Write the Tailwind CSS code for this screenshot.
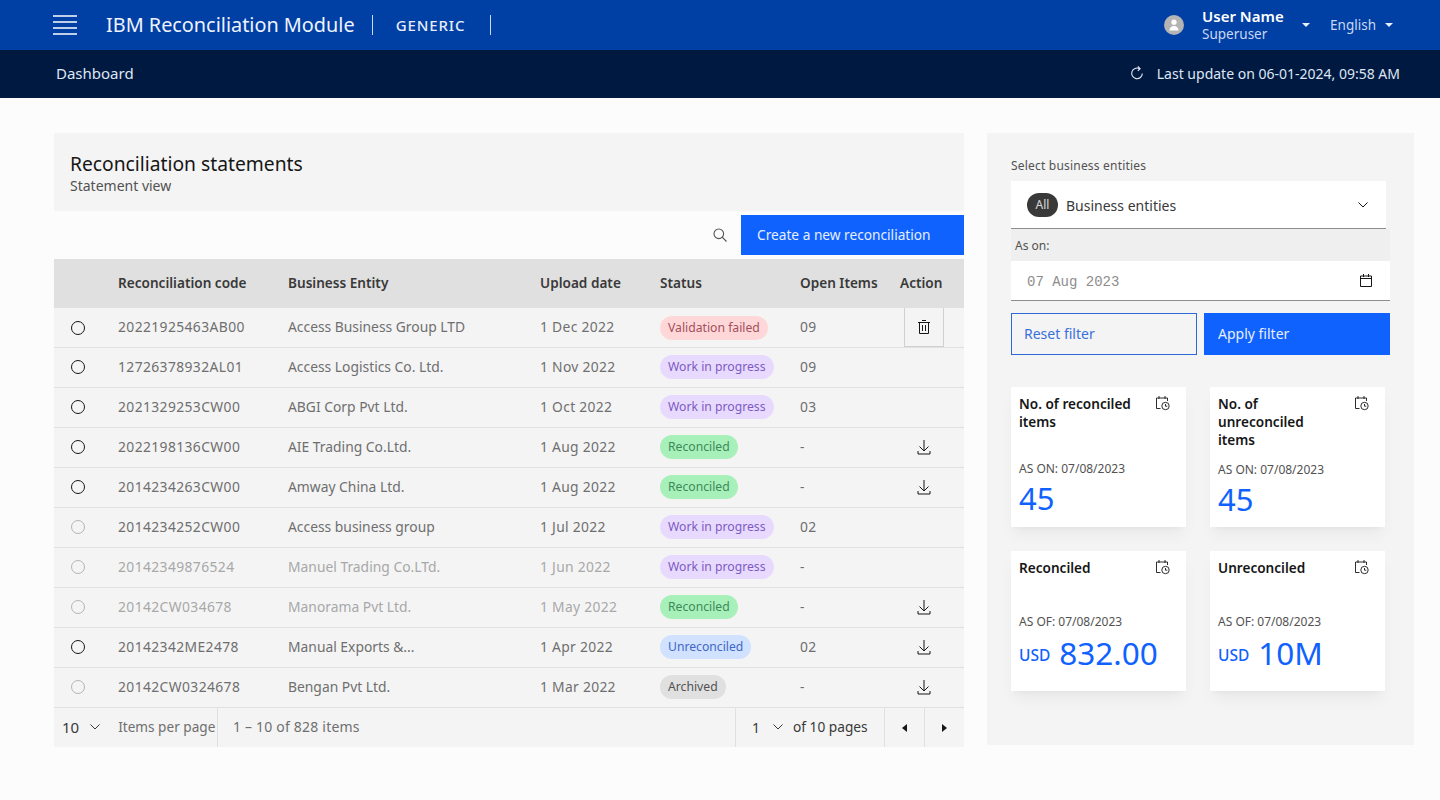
<!DOCTYPE html>
<html lang="en">
<head>
  <meta charset="UTF-8" />
  <title>IBM Reconciliation Module</title>
  <script src="https://cdn.jsdelivr.net/npm/@tailwindcss/browser@4"></script>
</head>
<body class="bg-[#fcfcfc] h-[800px] overflow-hidden font-['Noto_Sans',sans-serif] text-[#525252]">

  <!-- Top bar -->
  <header class="h-[50px] bg-[#003fa3] text-white flex items-center pl-[53px] pr-[47px]">
    <svg width="24" height="20" viewBox="0 0 24 20" stroke="#fff" stroke-width="1.500"><path d="M0 1h24M0 7h24M0 13h24M0 19h24" /></svg>
    <span class="ml-[29px] text-[19.850px] text-[#eef3ff]">IBM Reconciliation Module</span>
    <span class="ml-[17px] w-px h-5 bg-white/80"></span>
    <span class="ml-[23px] text-[15px] tracking-[0.9px] font-medium text-[#e6edfb]">GENERIC</span>
    <span class="ml-6 w-px h-5 bg-white/80"></span>
    <div class="ml-auto flex items-center">
      <span class="w-5 h-5 rounded-full bg-[#b4b4b4] flex items-center justify-center">
        <svg width="10" height="12" viewBox="0 0 10 12" fill="#fff"><circle cx="5" cy="3.200" r="2.600" /><path d="M0.500 11.500c0-3 2-4.500 4.500-4.500s4.500 1.500 4.500 4.500z" /></svg>
      </span>
      <div class="ml-[18px] w-[94px] flex flex-col">
        <span class="text-[15px] font-semibold leading-[18px] -mt-px">User Name</span>
        <span class="text-[13.500px] leading-[18px] text-[#c9d8f5]">Superuser</span>
      </div>
      <svg class="ml-[6px]" width="8" height="4" viewBox="0 0 8 4" fill="#e8efff"><path d="M0 0h8L4 4z" /></svg>
      <span class="ml-[20px] text-[13.500px] text-[#c9d8f5]">English</span>
      <svg class="ml-[9px]" width="8" height="4" viewBox="0 0 8 4" fill="#e8efff"><path d="M0 0h8L4 4z" /></svg>
    </div>
  </header>

  <!-- Sub bar -->
  <div class="h-[48px] pb-[2px] bg-[#001941] text-[#dfe6f3] flex items-center justify-between pl-[56px] pr-[40px]">
    <span class="text-[15px]">Dashboard</span>
    <div class="flex items-center text-[14px]">
      <svg width="14" height="14" viewBox="0 0 14 14" fill="none" stroke="#e6ebf5" stroke-width="1.100"><path d="M9.500 2.700A5.300 5.300 0 1 0 12.300 7.500" /><path d="M7.800 0.500l2.300 2.200-2.300 2.200" /></svg>
      <span class="ml-[13px]">Last update on 06-01-2024, 09:58 AM</span>
    </div>
  </div>

  <main class="flex pl-[54px] pt-[35px]">
    <!-- Left column -->
    <section class="w-[910px]">
      <div class="h-[78px] bg-[#f4f4f4] pl-4 pt-[18px]">
        <h1 class="text-[19.250px] leading-[26px] text-[#161616]">Reconciliation statements</h1>
        <p class="text-[14px] leading-[18px] text-[#525252]">Statement view</p>
      </div>

      <div class="h-[40px] mt-1 flex items-center justify-end">
        <svg width="14" height="14" viewBox="0 0 14 14" fill="none" stroke="#525252" stroke-width="1.100"><circle cx="5.800" cy="5.800" r="4.800" /><path d="M9.200 9.200L13.500 13.500" /></svg>
        <button class="ml-[14px] w-[223px] h-[40px] bg-[#0f62fe] text-[#e6eeff] text-[13.700px] text-left pl-4">Create a new reconciliation</button>
      </div>

      <div class="mt-1 h-[49px] bg-[#e0e0e0] grid grid-cols-[64px_170px_252px_120px_140px_100px_64px] items-center text-[13.600px] font-semibold text-[#393939]">
        <span></span><span>Reconciliation code</span><span>Business Entity</span><span>Upload date</span><span>Status</span><span>Open Items</span><span>Action</span>
      </div>

      <div class="text-[13.850px] text-[#6f6f6f]">
        <div class="h-10 pb-px bg-[#f4f4f4] border-b border-[#e0e0e0] grid grid-cols-[64px_170px_252px_120px_140px_100px_64px] items-center">
          <span class="ml-[17px] w-3.5 h-3.5 rounded-full border border-[#161616]"></span><span class="tracking-[0.4px]">20221925463AB00</span><span>Access Business Group LTD</span><span class="tracking-[0.3px]">1 Dec 2022</span>
          <span><span class="inline-block h-6 leading-6 px-2 rounded-full bg-[#ffd7d9] text-[#a2505a] text-[12.200px]">Validation failed</span></span><span class="tracking-[0.4px]">09</span>
          <span class="ml-1 w-10 h-[39px] bg-[#f4f4f4] border border-[#d0d0d0] border-t-0 flex items-center justify-center">
            <svg width="12" height="14" viewBox="0 0 12 14" fill="none" stroke="#161616"><path d="M0 2.500h12M4 .5h4M1.500 2.500v11h9v-11M4.500 5v6M7.500 5v6" /></svg>
          </span>
        </div>
        <div class="h-10 pb-px bg-[#f4f4f4] border-b border-[#e0e0e0] grid grid-cols-[64px_170px_252px_120px_140px_100px_64px] items-center">
          <span class="ml-[17px] w-3.5 h-3.5 rounded-full border border-[#161616]"></span><span class="tracking-[0.4px]">12726378932AL01</span><span>Access Logistics Co. Ltd.</span><span class="tracking-[0.3px]">1 Nov 2022</span>
          <span><span class="inline-block h-6 leading-6 px-2 rounded-full bg-[#e8daff] text-[#7d5bbf] text-[12.200px]">Work in progress</span></span><span class="tracking-[0.4px]">09</span><span></span>
        </div>
        <div class="h-10 pb-px bg-[#f4f4f4] border-b border-[#e0e0e0] grid grid-cols-[64px_170px_252px_120px_140px_100px_64px] items-center">
          <span class="ml-[17px] w-3.5 h-3.5 rounded-full border border-[#161616]"></span><span class="tracking-[0.4px]">2021329253CW00</span><span>ABGI Corp Pvt Ltd.</span><span class="tracking-[0.3px]">1 Oct 2022</span>
          <span><span class="inline-block h-6 leading-6 px-2 rounded-full bg-[#e8daff] text-[#7d5bbf] text-[12.200px]">Work in progress</span></span><span class="tracking-[0.4px]">03</span><span></span>
        </div>
        <div class="h-10 pb-px bg-[#f4f4f4] border-b border-[#e0e0e0] grid grid-cols-[64px_170px_252px_120px_140px_100px_64px] items-center">
          <span class="ml-[17px] w-3.5 h-3.5 rounded-full border border-[#161616]"></span><span class="tracking-[0.4px]">2022198136CW00</span><span>AIE Trading Co.Ltd.</span><span class="tracking-[0.3px]">1 Aug 2022</span>
          <span><span class="inline-block h-6 leading-6 px-2 rounded-full bg-[#a7f0ba] text-[#3d8a58] text-[12.200px]">Reconciled</span></span><span>-</span>
          <span class="ml-[17px]"><svg class="block" width="14" height="15" viewBox="0 0 14 15" fill="none" stroke="#161616"><path d="M7 0v10.500M2.500 6.500L7 11l4.500-4.500M1 11v3h12v-3" /></svg></span>
        </div>
        <div class="h-10 pb-px bg-[#f4f4f4] border-b border-[#e0e0e0] grid grid-cols-[64px_170px_252px_120px_140px_100px_64px] items-center">
          <span class="ml-[17px] w-3.5 h-3.5 rounded-full border border-[#161616]"></span><span class="tracking-[0.4px]">2014234263CW00</span><span>Amway China Ltd.</span><span class="tracking-[0.3px]">1 Aug 2022</span>
          <span><span class="inline-block h-6 leading-6 px-2 rounded-full bg-[#a7f0ba] text-[#3d8a58] text-[12.200px]">Reconciled</span></span><span>-</span>
          <span class="ml-[17px]"><svg class="block" width="14" height="15" viewBox="0 0 14 15" fill="none" stroke="#161616"><path d="M7 0v10.500M2.500 6.500L7 11l4.500-4.500M1 11v3h12v-3" /></svg></span>
        </div>
        <div class="h-10 pb-px bg-[#f4f4f4] border-b border-[#e0e0e0] grid grid-cols-[64px_170px_252px_120px_140px_100px_64px] items-center">
          <span class="ml-[17px] w-3.5 h-3.5 rounded-full border border-[#b5b5b5]"></span><span class="tracking-[0.4px]">2014234252CW00</span><span>Access business group</span><span class="tracking-[0.3px]">1 Jul 2022</span>
          <span><span class="inline-block h-6 leading-6 px-2 rounded-full bg-[#e8daff] text-[#7d5bbf] text-[12.200px]">Work in progress</span></span><span class="tracking-[0.4px]">02</span><span></span>
        </div>
        <div class="h-10 pb-px bg-[#f4f4f4] border-b border-[#e0e0e0] grid grid-cols-[64px_170px_252px_120px_140px_100px_64px] items-center text-[#a8a8a8]">
          <span class="ml-[17px] w-3.5 h-3.5 rounded-full border border-[#b5b5b5]"></span><span class="tracking-[0.4px]">20142349876524</span><span>Manuel Trading Co.LTd.</span><span class="tracking-[0.3px]">1 Jun 2022</span>
          <span><span class="inline-block h-6 leading-6 px-2 rounded-full bg-[#e8daff] text-[#7d5bbf] text-[12.200px]">Work in progress</span></span><span class="text-[#6f6f6f]">-</span><span></span>
        </div>
        <div class="h-10 pb-px bg-[#f4f4f4] border-b border-[#e0e0e0] grid grid-cols-[64px_170px_252px_120px_140px_100px_64px] items-center text-[#a8a8a8]">
          <span class="ml-[17px] w-3.5 h-3.5 rounded-full border border-[#b5b5b5]"></span><span class="tracking-[0.4px]">20142CW034678</span><span>Manorama Pvt Ltd.</span><span class="tracking-[0.3px]">1 May 2022</span>
          <span><span class="inline-block h-6 leading-6 px-2 rounded-full bg-[#a7f0ba] text-[#3d8a58] text-[12.200px]">Reconciled</span></span><span class="text-[#6f6f6f]">-</span>
          <span class="ml-[17px]"><svg class="block" width="14" height="15" viewBox="0 0 14 15" fill="none" stroke="#161616"><path d="M7 0v10.500M2.500 6.500L7 11l4.500-4.500M1 11v3h12v-3" /></svg></span>
        </div>
        <div class="h-10 pb-px bg-[#f4f4f4] border-b border-[#e0e0e0] grid grid-cols-[64px_170px_252px_120px_140px_100px_64px] items-center">
          <span class="ml-[17px] w-3.5 h-3.5 rounded-full border border-[#161616]"></span><span class="tracking-[0.4px]">20142342ME2478</span><span>Manual Exports &amp;...</span><span class="tracking-[0.3px]">1 Apr 2022</span>
          <span><span class="inline-block h-6 leading-6 px-2 rounded-full bg-[#d0e2ff] text-[#3f66c4] text-[12.200px]">Unreconciled</span></span><span class="tracking-[0.4px]">02</span>
          <span class="ml-[17px]"><svg class="block" width="14" height="15" viewBox="0 0 14 15" fill="none" stroke="#161616"><path d="M7 0v10.500M2.500 6.500L7 11l4.500-4.500M1 11v3h12v-3" /></svg></span>
        </div>
        <div class="h-10 pb-px bg-[#f4f4f4] border-b border-[#e0e0e0] grid grid-cols-[64px_170px_252px_120px_140px_100px_64px] items-center">
          <span class="ml-[17px] w-3.5 h-3.5 rounded-full border border-[#b5b5b5]"></span><span class="tracking-[0.4px]">20142CW0324678</span><span>Bengan Pvt Ltd.</span><span class="tracking-[0.3px]">1 Mar 2022</span>
          <span><span class="inline-block h-6 leading-6 px-2 rounded-full bg-[#e0e0e0] text-[#525252] text-[12.200px]">Archived</span></span><span>-</span>
          <span class="ml-[17px]"><svg class="block" width="14" height="15" viewBox="0 0 14 15" fill="none" stroke="#161616"><path d="M7 0v10.500M2.500 6.500L7 11l4.500-4.500M1 11v3h12v-3" /></svg></span>
        </div>
      </div>

      <!-- Pagination -->
      <div class="h-[39px] bg-[#f4f4f4] flex items-center text-[14px] text-[#6f6f6f]">
        <div class="w-[164px] h-full pb-px flex items-center border-r border-[#e0e0e0] pl-2">
          <span class="text-[15px] text-[#393939]">10</span>
          <svg class="ml-[11px]" width="10" height="6" viewBox="0 0 10 6" fill="none" stroke="#393939"><path d="M0.500 0.500L5 5l4.500-4.500" /></svg>
          <span class="ml-[18px] text-[13.600px] whitespace-nowrap">Items per page</span>
        </div>
        <span class="ml-[15px] mb-[2px] tracking-[0.2px]">1 – 10 of 828 items</span>
        <div class="ml-auto h-full flex items-center">
          <div class="w-[149px] h-full pb-px flex items-center border-l border-[#e0e0e0] pl-4">
            <span class="text-[#393939]">1</span>
            <svg class="ml-[13px]" width="10" height="6" viewBox="0 0 10 6" fill="none" stroke="#393939"><path d="M0.500 0.500L5 5l4.500-4.500" /></svg>
            <span class="ml-[10px] text-[13.700px] text-[#393939] whitespace-nowrap">of 10 pages</span>
          </div>
          <div class="w-10 h-full flex items-center justify-center border-l border-[#e0e0e0]"><svg width="5" height="8" viewBox="0 0 5 8" fill="#161616"><path d="M5 0v8L0 4z" /></svg></div>
          <div class="w-10 h-full flex items-center justify-center border-l border-[#e0e0e0]"><svg width="5" height="8" viewBox="0 0 5 8" fill="#161616"><path d="M0 0v8l5-4z" /></svg></div>
        </div>
      </div>
    </section>

    <!-- Right panel -->
    <aside class="ml-[23px] w-[427px] h-[612px] bg-[#f4f4f4] pl-6 pr-6 pt-6">
      <p class="text-[12px] tracking-[0.2px] leading-4 text-[#525252] mt-px">Select business entities</p>
      <div class="mt-[7px] w-[375px] h-[48px] pt-px bg-white border-b border-[#8d8d8d] flex items-center pl-4 pr-[18px]">
        <span class="w-[31px] h-6 rounded-full bg-[#393939] text-white/80 text-xs flex items-center justify-center">All</span>
        <span class="ml-2 text-[14px] text-[#393939]">Business entities</span>
        <svg class="ml-auto" width="10" height="6" viewBox="0 0 10 6" fill="none" stroke="#161616"><path d="M0.500 0.500L5 5l4.500-4.500" /></svg>
      </div>
      <div class="w-[379px] h-[32px] bg-[#efefef] pl-1 pt-[9px] text-[12px] leading-4">As on:</div>
      <div class="w-[379px] h-[40px] bg-white border-b border-[#8d8d8d] flex items-center pl-4 pr-[18px]">
        <span class="mt-[2px] font-['Liberation_Mono',monospace] text-sm text-[#8d8d8d]">07 Aug 2023</span>
        <svg class="ml-auto" width="12" height="13" viewBox="0 0 12 13" fill="none" stroke="#161616"><path d="M.5 2h11v10.500H.5zM.5 4.500h11M3.500 0v3M8.500 0v3" /></svg>
      </div>
      <div class="mt-3 w-[379px] flex justify-between text-[14px]">
        <button class="w-[186px] h-[42px] pb-px border border-[#2f69d8] text-[#3a70dc] text-left pl-3">Reset filter</button>
        <button class="w-[186px] h-[42px] pb-px bg-[#0f62fe] text-[#e6eeff] text-left pl-[14px]">Apply filter</button>
      </div>

      <div class="mt-8 grid grid-cols-[175px_175px] gap-x-6 gap-y-6">
        <div class="h-[140px] bg-white shadow-lg shadow-black/5 relative pl-2 pt-2">
          <svg class="absolute right-4 top-[9px]" width="14" height="15" viewBox="0 0 14 15" fill="none" stroke="#161616" stroke-width="0.900"><path d="M4.500 12.500H.5v-10.500h11v3M3 0v3M9 0v3" /><circle cx="9.500" cy="10" r="3.700" /><path d="M9.500 8v2.200h1.800" /></svg>
          <h3 class="w-[140px] text-[13.600px] leading-[18px] font-semibold text-[#161616]">No. of reconciled items</h3>
          <p class="absolute left-2 top-[74px] text-[12px] leading-4">AS ON: 07/08/2023</p>
          <p class="absolute left-2 top-[93px] text-[31px] leading-9 text-[#0f62fe]">45</p>
        </div>
        <div class="h-[140px] bg-white shadow-lg shadow-black/5 relative pl-2 pt-2">
          <svg class="absolute right-4 top-[9px]" width="14" height="15" viewBox="0 0 14 15" fill="none" stroke="#161616" stroke-width="0.900"><path d="M4.500 12.500H.5v-10.500h11v3M3 0v3M9 0v3" /><circle cx="9.500" cy="10" r="3.700" /><path d="M9.500 8v2.200h1.800" /></svg>
          <h3 class="w-[120px] text-[13.600px] leading-[18px] font-semibold text-[#161616]">No. of unreconciled items</h3>
          <p class="absolute left-2 top-[75px] text-[12px] leading-4">AS ON: 07/08/2023</p>
          <p class="absolute left-2 top-[94px] text-[31px] leading-9 text-[#0f62fe]">45</p>
        </div>
        <div class="h-[140px] bg-white shadow-lg shadow-black/5 relative pl-2 pt-2">
          <svg class="absolute right-4 top-[9px]" width="14" height="15" viewBox="0 0 14 15" fill="none" stroke="#161616" stroke-width="0.900"><path d="M4.500 12.500H.5v-10.500h11v3M3 0v3M9 0v3" /><circle cx="9.500" cy="10" r="3.700" /><path d="M9.500 8v2.200h1.800" /></svg>
          <h3 class="text-[13.600px] leading-[18px] font-semibold text-[#161616]">Reconciled</h3>
          <p class="absolute left-2 top-[63px] text-[12px] leading-4">AS OF: 07/08/2023</p>
          <p class="absolute left-2 top-[84px] h-9 flex items-center text-[#0f62fe]"><span class="mt-[5px] text-[15.500px] font-medium">USD</span><span class="ml-[9px] text-[31.500px] leading-9">832.00</span></p>
        </div>
        <div class="h-[140px] bg-white shadow-lg shadow-black/5 relative pl-2 pt-2">
          <svg class="absolute right-4 top-[9px]" width="14" height="15" viewBox="0 0 14 15" fill="none" stroke="#161616" stroke-width="0.900"><path d="M4.500 12.500H.5v-10.500h11v3M3 0v3M9 0v3" /><circle cx="9.500" cy="10" r="3.700" /><path d="M9.500 8v2.200h1.800" /></svg>
          <h3 class="text-[13.600px] leading-[18px] font-semibold text-[#161616]">Unreconciled</h3>
          <p class="absolute left-2 top-[63px] text-[12px] leading-4">AS OF: 07/08/2023</p>
          <p class="absolute left-2 top-[84px] h-9 flex items-center text-[#0f62fe]"><span class="mt-[5px] text-[15.500px] font-medium">USD</span><span class="ml-[9px] text-[31.500px] leading-9">10M</span></p>
        </div>
      </div>
    </aside>
  </main>
</body>
</html>
